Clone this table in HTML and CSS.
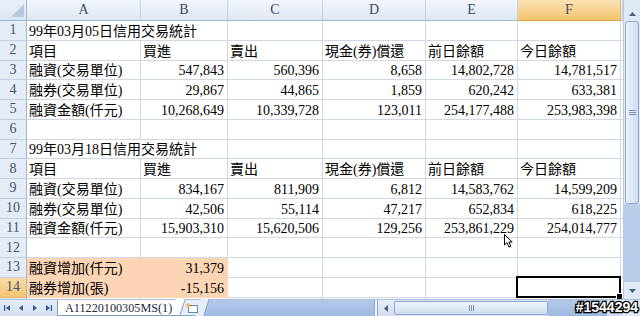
FILE: index.html
```html
<!DOCTYPE html>
<html lang="zh-Hant">
<head>
<meta charset="utf-8">
<title>信用交易統計</title>
<link rel="stylesheet" href="styles.css">
</head>
<body>
<div class="app">
  <div class="main">
    <div class="sheet">
      <div class="row hdr">
        <div class="corner"><svg width="27" height="20" viewBox="0 0 27 20"><polygon points="24,4 24,17 11,17" fill="#b7c8dd"/></svg></div>
        <div class="ch">A</div><div class="ch">B</div><div class="ch">C</div><div class="ch">D</div><div class="ch">E</div><div class="ch hl">F</div><div class="ch"></div>
      </div>
      <div class="row">
        <div class="rh">1</div><div class="c span2">99年03月05日信用交易統計</div><div class="c"></div><div class="c"></div><div class="c"></div><div class="c"></div><div class="c"></div>
      </div>
      <div class="row">
        <div class="rh">2</div><div class="c">項目</div><div class="c">買進</div><div class="c">賣出</div><div class="c">現金(券)償還</div><div class="c">前日餘額</div><div class="c">今日餘額</div><div class="c"></div>
      </div>
      <div class="row">
        <div class="rh">3</div><div class="c">融資(交易單位)</div><div class="c n">547,843</div><div class="c n">560,396</div><div class="c n">8,658</div><div class="c n">14,802,728</div><div class="c n">14,781,517</div><div class="c"></div>
      </div>
      <div class="row">
        <div class="rh">4</div><div class="c">融券(交易單位)</div><div class="c n">29,867</div><div class="c n">44,865</div><div class="c n">1,859</div><div class="c n">620,242</div><div class="c n">633,381</div><div class="c"></div>
      </div>
      <div class="row">
        <div class="rh">5</div><div class="c">融資金額(仟元)</div><div class="c n">10,268,649</div><div class="c n">10,339,728</div><div class="c n">123,011</div><div class="c n">254,177,488</div><div class="c n">253,983,398</div><div class="c"></div>
      </div>
      <div class="row">
        <div class="rh">6</div><div class="c"></div><div class="c"></div><div class="c"></div><div class="c"></div><div class="c"></div><div class="c"></div><div class="c"></div>
      </div>
      <div class="row">
        <div class="rh">7</div><div class="c span2">99年03月18日信用交易統計</div><div class="c"></div><div class="c"></div><div class="c"></div><div class="c"></div><div class="c"></div>
      </div>
      <div class="row">
        <div class="rh">8</div><div class="c">項目</div><div class="c">買進</div><div class="c">賣出</div><div class="c">現金(券)償還</div><div class="c">前日餘額</div><div class="c">今日餘額</div><div class="c"></div>
      </div>
      <div class="row">
        <div class="rh">9</div><div class="c">融資(交易單位)</div><div class="c n">834,167</div><div class="c n">811,909</div><div class="c n">6,812</div><div class="c n">14,583,762</div><div class="c n">14,599,209</div><div class="c"></div>
      </div>
      <div class="row">
        <div class="rh">10</div><div class="c">融券(交易單位)</div><div class="c n">42,506</div><div class="c n">55,114</div><div class="c n">47,217</div><div class="c n">652,834</div><div class="c n">618,225</div><div class="c"></div>
      </div>
      <div class="row">
        <div class="rh">11</div><div class="c">融資金額(仟元)</div><div class="c n">15,903,310</div><div class="c n">15,620,506</div><div class="c n">129,256</div><div class="c n">253,861,229</div><div class="c n">254,014,777</div><div class="c"></div>
      </div>
      <div class="row">
        <div class="rh">12</div><div class="c"></div><div class="c"></div><div class="c"></div><div class="c"></div><div class="c"></div><div class="c"></div><div class="c"></div>
      </div>
      <div class="row">
        <div class="rh">13</div><div class="c or">融資增加(仟元)</div><div class="c n or">31,379</div><div class="c"></div><div class="c"></div><div class="c"></div><div class="c"></div><div class="c"></div>
      </div>
      <div class="row">
        <div class="rh hl">14</div><div class="c or">融券增加(張)</div><div class="c n or">-15,156</div><div class="c"></div><div class="c"></div><div class="c"></div><div class="c sel"></div><div class="c"></div>
      </div>
      <div class="row">
        <div class="rh"></div><div class="c"></div><div class="c"></div><div class="c"></div><div class="c"></div><div class="c"></div><div class="c"></div><div class="c"></div>
      </div>
    </div>
    <div class="vscroll">
      <div class="vbtn up"><svg width="7" height="4" viewBox="0 0 7 4"><path d="M0 4 L3.5 0 L7 4 Z" fill="#4a5f86"/></svg></div>
      <div class="vthumb"><span class="grip-h"></span></div>
      <div class="vtrack"></div>
      <div class="vbtn down"><svg width="7" height="4" viewBox="0 0 7 4"><path d="M0 0 L3.5 4 L7 0 Z" fill="#4a5f86"/></svg></div>
    </div>
  </div>
  <div class="tabbar">
    <div class="nav">
      <span class="navbtn"><svg width="6" height="6" viewBox="0 0 6 6"><rect x="0" y="0" width="1.2" height="6" fill="#34568c"/><path d="M6 0 L2 3 L6 6 Z" fill="#34568c"/></svg></span>
      <span class="navbtn"><svg width="4" height="6" viewBox="0 0 4 6"><path d="M4 0 L0 3 L4 6 Z" fill="#34568c"/></svg></span>
      <span class="navbtn"><svg width="4" height="6" viewBox="0 0 4 6"><path d="M0 0 L4 3 L0 6 Z" fill="#34568c"/></svg></span>
      <span class="navbtn"><svg width="6" height="6" viewBox="0 0 6 6"><path d="M0 0 L4 3 L0 6 Z" fill="#34568c"/><rect x="4.8" y="0" width="1.2" height="6" fill="#34568c"/></svg></span>
    </div>
    <div class="tab"><span class="tabtext">A11220100305MS(1)</span></div>
    <div class="newtab"><svg width="14" height="12" viewBox="0 0 14 12"><rect x="3.5" y="3.5" width="9" height="7" fill="#fff" stroke="#6d87b3"/><path d="M3 0.5 L3.8 2.3 L5.7 2.5 L4.2 3.7 L4.7 5.6 L3 4.6 L1.3 5.6 L1.8 3.7 L0.3 2.5 L2.2 2.3 Z" fill="#f2b33d"/></svg></div>
    <div class="tabfill"></div>
    <div class="split"></div>
    <div class="hbtn"><svg width="4" height="7" viewBox="0 0 4 7"><path d="M4 0 L0 3.5 L4 7 Z" fill="#4a5f86"/></svg></div>
    <div class="hthumb"><span class="grip-v"></span></div>
    <div class="htrack"></div>
    <div class="hbtn"><svg width="4" height="7" viewBox="0 0 4 7"><path d="M0 0 L4 3.5 L0 7 Z" fill="#4a5f86"/></svg></div>
    <div class="bcorner"></div>
  </div>
  <svg class="cursor" width="10" height="14" viewBox="0 0 10 14"><path d="M0.5 0.5 L0.5 11 L3 8.6 L5 13 L6.8 12.2 L4.9 8 L8.2 8 Z" fill="#fff" stroke="#000" stroke-width="1"/></svg>
  <div class="wm">#1544294</div>
</div>
</body>
</html>
```
FILE: styles.css
```css
* { box-sizing: border-box; }
body {
  margin: 0;
  width: 640px;
  height: 316px;
  overflow: hidden;
  background: #fff;
  font-family: "Liberation Serif", "Noto Sans CJK TC", serif;
}
.app {
  position: relative;
  display: flex;
  flex-direction: column;
  width: 640px;
  height: 316px;
}
.main {
  display: flex;
  height: 299px;
}
.sheet {
  flex: 1;
  overflow: hidden;
}
.row {
  display: grid;
  grid-template-columns: 27px 114px 87px 95px 103px 92px 103px 1fr;
  height: 19.75px;
}
.row.hdr { height: 21px; }

.corner {
  background: linear-gradient(#eaf0f8, #dde6f1);
  border-right: 1px solid #9eb6ce;
  border-bottom: 1px solid #9eb6ce;
}
.corner svg { display: block; }
.ch {
  background: linear-gradient(#f2f6fb, #dfe7f2);
  border-right: 1px solid #c3d0e2;
  border-bottom: 1px solid #9eb6ce;
  color: #3c4c63;
  font-size: 14px;
  line-height: 16px;
  display: flex;
  align-items: center;
  justify-content: center;
}
.ch.hl {
  background: linear-gradient(#fae1b3, #f3c56f);
  border-right-color: #e4b463;
  border-bottom-color: #d9a145;
}
.rh {
  background: #e4ecf7;
  border-right: 1px solid #9eb6ce;
  border-bottom: 1px solid #c3d0e2;
  color: #45556c;
  font-size: 14px;
  line-height: 16px;
  display: flex;
  align-items: center;
  justify-content: center;
}
.rh.hl {
  background: linear-gradient(#fadca6, #f3c673);
  border-bottom-color: #e0b060;
}
.c {
  border-right: 1px solid #d0d7e5;
  border-bottom: 1px solid #d0d7e5;
  font-size: 14px;
  line-height: 16px;
  color: #000;
  display: flex;
  align-items: flex-end;
  padding: 0 3px 0 2px;
  white-space: nowrap;
  overflow: hidden;
}
.c.n { justify-content: flex-end; }
.c.span2 { grid-column: span 2; }
.c.or {
  background: #fcd5b4;
  border-color: #fcd5b4;
}
.c.sel {
  position: relative;
  overflow: visible;
}
.c.sel::after {
  content: "";
  position: absolute;
  left: -2px;
  top: -2px;
  right: -1px;
  bottom: -1px;
  border: 2px solid #000;
}
.c.sel::before {
  content: "";
  position: absolute;
  right: -3px;
  bottom: -3px;
  width: 5px;
  height: 5px;
  background: #000;
  border: 1px solid #fff;
  z-index: 2;
}

/* vertical scrollbar */
.vscroll {
  width: 17px;
  display: flex;
  flex-direction: column;
  background: #dfe8f5;
  border-left: 1px solid #b9c9de;
}
.vbtn {
  display: flex;
  align-items: center;
  justify-content: center;
}
.vbtn svg { display: block; }
.vbtn.up {
  height: 21px;
  padding-top: 6px;
}
.vbtn.down { height: 17px; }
.vthumb {
  height: 183px;
  margin: 0 1px;
  border: 1px solid #8fa8cc;
  border-radius: 3px;
  background: linear-gradient(90deg, #eef3fb, #cddbef);
  display: flex;
  align-items: center;
  justify-content: center;
}
.grip-h {
  width: 7px;
  height: 5px;
  border-top: 1px solid #7d92b4;
  border-bottom: 1px solid #7d92b4;
  background: linear-gradient(transparent 1px, #7d92b4 1px, #7d92b4 2px, transparent 2px);
}
.vtrack {
  flex: 1;
  background: #b9cde9;
}

/* bottom tab bar */
.tabbar {
  height: 17px;
  display: flex;
  border-top: 1px solid #a9bdd8;
  background: #d8e3f2;
}
.nav {
  width: 57px;
  display: flex;
  align-items: center;
  background: linear-gradient(#e4ecf7, #d3dff0);
}
.navbtn {
  width: 14px;
  display: flex;
  justify-content: center;
}
.navbtn svg { display: block; }
.tab {
  position: relative;
  z-index: 2;
  width: 121px;
  padding-left: 7px;
  background: #fff;
  border-left: 1px solid #7f99c2;
  border-bottom: 1px solid #7f99c2;
  display: flex;
  align-items: center;
}
.tab::after {
  content: "";
  position: absolute;
  top: -1px;
  bottom: -1px;
  right: -5px;
  width: 9px;
  background: #fff;
  border-right: 1px solid #7f99c2;
  border-bottom: 1px solid #7f99c2;
  transform: skewX(-18deg);
}
.tabtext {
  position: relative;
  z-index: 1;
  font-size: 12.2px;
  line-height: 14px;
  color: #1d2a3c;
  white-space: nowrap;
}
.newtab {
  position: relative;
  z-index: 1;
  width: 25px;
  padding-left: 7px;
  background: #e6edf7;
  border-bottom: 1px solid #8ea6ca;
  display: flex;
  align-items: center;
}
.newtab::after {
  content: "";
  position: absolute;
  top: -1px;
  bottom: -1px;
  right: -4px;
  width: 8px;
  background: #e6edf7;
  border-right: 1px solid #7f99c2;
  transform: skewX(-18deg);
}
.newtab svg { position: relative; z-index: 1; display: block; }
.tabfill {
  width: 171px;
  background: linear-gradient(#b3c9e9, #9db9e1);
}
.split {
  width: 4px;
  background: #f0f5fb;
  border-left: 1px solid #8ea8cd;
  border-right: 1px solid #8ea8cd;
}
.hbtn {
  width: 16px;
  display: flex;
  align-items: center;
  justify-content: center;
  background: linear-gradient(#e6eef8, #d2def0);
}
.hbtn svg { display: block; }
.hthumb {
  width: 154px;
  margin: 1px 0;
  border: 1px solid #8ea8cd;
  border-radius: 2px;
  background: linear-gradient(#eef4fb, #cfdcef);
  display: flex;
  align-items: center;
  justify-content: center;
}
.grip-v {
  width: 5px;
  height: 6px;
  border-left: 1px solid #7d92b4;
  border-right: 1px solid #7d92b4;
  background: linear-gradient(90deg, transparent 1px, #7d92b4 1px, #7d92b4 2px, transparent 2px);
}
.htrack {
  flex: 1;
  background: linear-gradient(#b3c9e9, #9db9e1);
}
.bcorner {
  width: 17px;
  background: #dfe8f5;
}

/* overlays */
.cursor {
  position: absolute;
  left: 504px;
  top: 234px;
}
.wm {
  position: absolute;
  right: 2px;
  bottom: 1px;
  font-family: "Liberation Sans", sans-serif;
  font-weight: bold;
  font-size: 14px;
  line-height: 15px;
  color: #fff;
  -webkit-text-stroke: 2.5px #000;
  paint-order: stroke fill;
  z-index: 5;
}
```
